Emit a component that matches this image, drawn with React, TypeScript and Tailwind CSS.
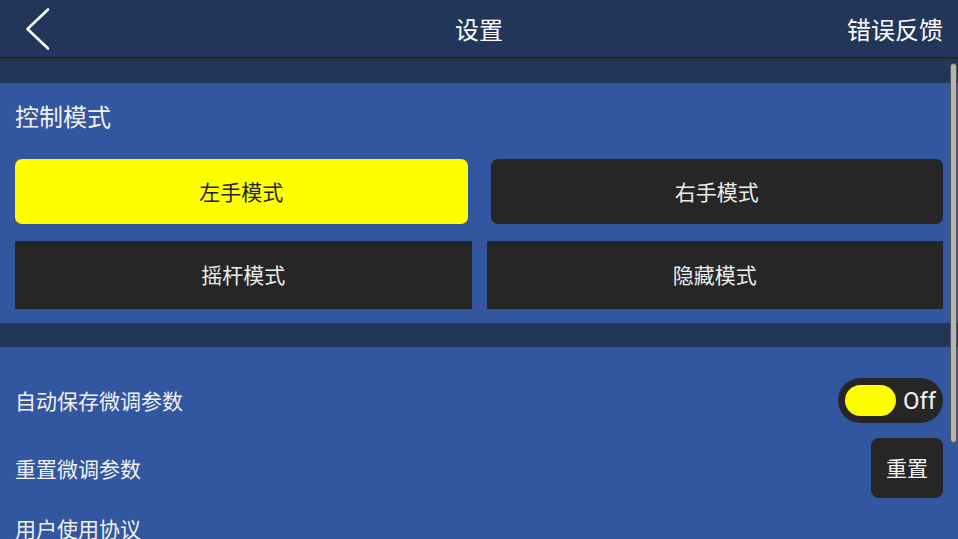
import React from "react";

export default function App() {
  return (
    <div className="relative w-[958px] h-[539px] overflow-hidden bg-[#22365a] font-['Noto_Sans_CJK_SC','Noto_Sans',sans-serif] text-[#f2f2f2]">
      {/* Header */}
      <div className="grid grid-cols-[1fr_auto_1fr] items-center h-[57px] bg-[#22365a]">
        <div className="flex items-center pl-[25px]">
          <svg width="26" height="44" viewBox="0 0 26 44" fill="none">
            <path d="M23 2.5 L2.5 22 L23 41.5" stroke="#ffffff" strokeWidth="2.6" strokeLinecap="round" strokeLinejoin="round" />
          </svg>
        </div>
        <div className="text-[24px] leading-none text-white">设置</div>
        <div className="flex justify-end pr-[15px] text-[24px] leading-none text-white">错误反馈</div>
      </div>
      <div className="h-[2px] bg-[#262626]" />
      <div className="h-[24px] bg-[#22365a]" />

      {/* Control mode section */}
      <div className="bg-[#3256a0] px-[15px] pb-[14px]">
        <div className="h-[65px] flex items-center text-[24px] leading-none">控制模式</div>
        <div className="mt-[11px] flex gap-[23px]">
          <div className="flex-1 h-[65px] rounded-[7px] bg-[#ffff00] flex items-center justify-center text-[21px] text-[#222222]">左手模式</div>
          <div className="flex-1 h-[65px] rounded-[7px] bg-[#262626] flex items-center justify-center text-[21px] text-[#eeeeee]">右手模式</div>
        </div>
        <div className="mt-[17px] flex gap-[15px]">
          <div className="flex-1 h-[68px] bg-[#262626] flex items-center justify-center text-[21px] text-[#eeeeee]">摇杆模式</div>
          <div className="flex-1 h-[68px] bg-[#262626] flex items-center justify-center text-[21px] text-[#eeeeee]">隐藏模式</div>
        </div>
      </div>
      <div className="h-[24px] bg-[#22365a]" />

      {/* Settings rows */}
      <div className="bg-[#3256a0] pl-[15px] pr-[15px] pt-[31px] h-[300px]">
        <div className="h-[45px] flex items-center justify-between">
          <span className="text-[21px] leading-none">自动保存微调参数</span>
          <div className="w-[105px] h-[45px] rounded-full bg-[#262626] flex items-center pl-[7px] gap-[7px]">
            <div className="w-[51px] h-[31px] rounded-full bg-[#ffff00]" />
            <span className="font-['Roboto',sans-serif] text-[24px] leading-none text-[#f2f2f2]">Off</span>
          </div>
        </div>
        <div className="mt-[15px] h-[60px] flex items-center justify-between">
          <span className="text-[21px] leading-none">重置微调参数</span>
          <div className="w-[72px] h-[60px] rounded-[8px] bg-[#262626] flex items-center justify-center text-[21px] text-[#f2f2f2]">重置</div>
        </div>
        <div className="h-[60px] flex items-center">
          <span className="text-[21px] leading-none">用户使用协议</span>
        </div>
      </div>

      {/* Scrollbar overlay */}
      <div className="absolute left-[950px] top-[63px] w-[7px] h-[380px] rounded-full bg-[#b4b4b4] border border-[#555555]" />
    </div>
  );
}
